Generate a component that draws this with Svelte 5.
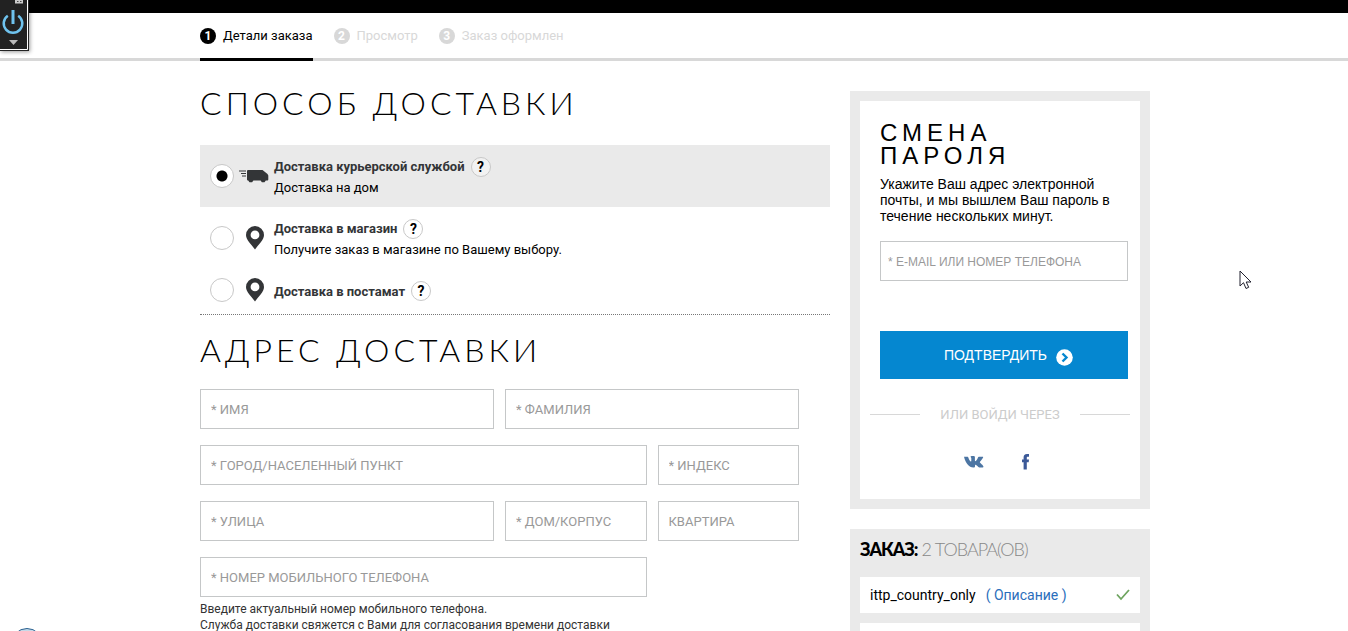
<script>
  const steps = ['Детали заказа', 'Просмотр', 'Заказ оформлен'];
  const methods = [
    { id: 'courier', title: 'Доставка курьерской службой', note: 'Доставка на дом', icon: 'van' },
    { id: 'shop', title: 'Доставка в магазин', note: 'Получите заказ в магазине по Вашему выбору.', icon: 'pin' },
    { id: 'postamat', title: 'Доставка в постамат', note: '', icon: 'pin' }
  ];
  const fields = [
    { id: 'first', label: '* ИМЯ', size: 'half' },
    { id: 'last', label: '* ФАМИЛИЯ', size: 'half' },
    { id: 'city', label: '* ГОРОД/НАСЕЛЕННЫЙ ПУНКТ', size: 'wide' },
    { id: 'zip', label: '* ИНДЕКС', size: 'quarter' },
    { id: 'street', label: '* УЛИЦА', size: 'half' },
    { id: 'house', label: '* ДОМ/КОРПУС', size: 'quarter' },
    { id: 'flat', label: 'КВАРТИРА', size: 'quarter' },
    { id: 'phone', label: '* НОМЕР МОБИЛЬНОГО ТЕЛЕФОНА', size: 'wide' }
  ];
  let chosen = $state('courier');
</script>

<div class="page">
  <div class="topbar"></div>
  <nav class="progress">
    <ol class="container steps">
      {#each steps as step, i}
        <li class:active={i === 0}><span class="num">{i + 1}</span>{step}</li>
      {/each}
    </ol>
  </nav>

  <main class="container columns">
    <form class="checkout">
      <h1>СПОСОБ ДОСТАВКИ</h1>
      <div class="methods">
        {#each methods as m}
          <div class="method" class:selected={chosen === m.id}>
            <input type="radio" name="method" id={m.id} value={m.id} bind:group={chosen} />
            <span class="icon">
              {#if m.icon === 'van'}
                <svg width="30" height="14" viewBox="0 0 30 14" aria-hidden="true">
                  <path d="M0 2h7M2 4.500h5M3 7h4" stroke="#333537" stroke-width="1.200" />
                  <path d="M8 2q0-1 1-1h14.500l5 4 .8 1.500v4q0 1-1 1h-1.500l-1.300 1.800h-2.600l-1.300-1.800h-7.200l-1.300 1.800h-2.600l-1.300-1.800H9q-1 0-1-1z" fill="#333537" />
                </svg>
              {:else}
                <svg class="pin" width="18" height="24" viewBox="0 0 18 24" aria-hidden="true">
                  <path fill-rule="evenodd" d="M9 0a9 9 0 0 0-9 9c0 5 5 9 9 14.500C13 18 18 14 18 9a9 9 0 0 0-9-9zm0 4.500a4.400 4.400 0 1 1 0 8.800 4.400 4.400 0 0 1 0-8.800z" fill="#333537" />
                </svg>
              {/if}
            </span>
            <div class="text">
              <div class="title">
                <label for={m.id}>{m.title}</label>
                <button type="button" class="help">?</button>
              </div>
              {#if m.note}<div class="note">{m.note}</div>{/if}
            </div>
          </div>
        {/each}
      </div>

      <h1>АДРЕС ДОСТАВКИ</h1>
      <div class="fields">
        {#each fields as f}
          <input class="field {f.size}" type="text" id={f.id} placeholder={f.label} aria-label={f.label} />
        {/each}
      </div>
      <p class="hint">Введите актуальный номер мобильного телефона.<br />Служба доставки свяжется с Вами для согласования времени доставки</p>
    </form>

    <aside>
      <section class="password">
        <h2>СМЕНА ПАРОЛЯ</h2>
        <p>Укажите Ваш адрес электронной почты, и мы вышлем Ваш пароль в течение нескольких минут.</p>
        <input class="field email" type="text" placeholder="* E-MAIL ИЛИ НОМЕР ТЕЛЕФОНА" aria-label="E-mail или номер телефона" />
        <button type="button" class="submit">
          ПОДТВЕРДИТЬ
          <svg width="17" height="17" viewBox="0 0 17 17" aria-hidden="true">
            <circle cx="8.5" cy="8.500" r="8.300" fill="#fff" />
            <path d="M6.500 4.500l4 4-4 4" fill="none" stroke="#0587d0" stroke-width="2.400" />
          </svg>
        </button>
        <div class="or"><span>ИЛИ ВОЙДИ ЧЕРЕЗ</span></div>
        <div class="social">
          <a href="#vk" aria-label="VK">
            <svg width="20" height="12" viewBox="0 0 20 12" aria-hidden="true">
              <path fill="#4c75a3" d="M0 .8h3.600q.5 0 .7.600c.9 2.400 2 4.100 2.600 4.100.3 0 .4-.2.4-1V2.300C7.200 1.100 6.500 1.200 6.500.7 7 .1 8 0 9 0c1.600 0 1.900.3 1.900 1.300v3.300c0 .5.200.7.400.7.400 0 2-2 2.700-3.900.2-.4.400-.6.900-.6h3.600c.8 0 .8.400.5 1-.8 1.700-3.200 4-3.200 4.500s3.600 3 3.700 4.500c0 .5-.4.700-.9.700h-3.300c-1.200 0-2.700-2.700-3.700-2.700-.5 0-.6.500-.6 1.500 0 .8-.3 1.200-1.700 1.200C5 11.500 1.700 7.500 0 .8z" />
            </svg>
          </a>
          <a href="#fb" aria-label="Facebook">
            <svg width="8" height="16" viewBox="0 0 8 16" aria-hidden="true">
              <path fill="#3b5998" d="M1.600 15.500V8.300H0V5.500h1.600V3.600C1.600 1.200 2.600 0 5 0h2v2.800H5.800c-.8 0-1 .3-1 1v1.700h2.200l-.3 2.800H4.800v7.200z" />
            </svg>
          </a>
        </div>
      </section>

      <section class="order">
        <h3><strong>ЗАКАЗ:</strong> 2 ТОВАРА(ОВ)</h3>
        <div class="promo">
          <span>ittp_country_only</span>
          <a href="#about">( Описание )</a>
          <svg width="14" height="12" viewBox="0 0 14 12" aria-hidden="true">
            <path d="M1 5.500L5 10 13 1" fill="none" stroke="#6ea45f" stroke-width="1.800" />
          </svg>
        </div>
        <div class="promo"></div>
      </section>
    </aside>
  </main>

  <div class="power">
    <svg width="29" height="51" viewBox="0 0 29 51" aria-hidden="true">
      <path d="M0 0h29v51H0z" fill="#222" />
      <path d="M27.500 0v49.500H0" fill="none" stroke="#fff" />
      <path d="M15 0h8v3.500h-8z" fill="#ccc" />
      <path d="M17 1.500h1.500M20 1.500h1.500" stroke="#444" />
      <path d="M7.800 15.700a9.300 9.300 0 1 0 10.400 0" fill="none" stroke="#6fc3ee" stroke-width="2.500" />
      <path d="M13 10v14" stroke="#6fc3ee" stroke-width="3" />
      <path d="M9 40h9l-4.500 5z" fill="#bbb" />
    </svg>
  </div>
  <svg class="cursor" width="13" height="20" viewBox="0 0 13 20" aria-hidden="true">
    <path d="M1 1v15l3.500-3.300L7 18.500l2.700-1.200-2.500-5.300h4.800z" fill="#fff" stroke="#20202e" />
  </svg>
  <div class="orb"></div>
</div>

<style>
  :global(body) { margin: 0; background: #fff; }
  .page {
    position: relative;
    height: 100vh;
    overflow: hidden;
    font: 13px/21px Roboto, "Liberation Sans", sans-serif;
    color: #000;
  }
  .page *, .page *::before { box-sizing: border-box; }
  h1, h2, h3, p, ol { margin: 0; padding: 0; }
  a { text-decoration: none; }
  input, button { font-family: inherit; margin: 0; }
  .container { max-width: 952px; margin: 0 auto; padding-left: 2px; }
  .topbar { height: 13px; background: #000; }
  .progress { border-bottom: 3px solid #d8d8d8; }
  .steps { display: flex; gap: 21px; list-style: none; }
  .steps li {
    display: flex;
    align-items: center;
    gap: 7px;
    height: 48px;
    margin-bottom: -3px;
    border-bottom: 3px solid transparent;
    color: #d8d8d8;
  }
  .steps .active { color: #000; border-color: #000; }
  .num {
    width: 16px;
    height: 16px;
    border-radius: 50%;
    background: #d8d8d8;
    color: #fff;
    font-size: 12px;
    font-weight: 700;
    line-height: 16px;
    text-align: center;
  }
  .active .num { background: #000; }
  .columns {
    display: grid;
    grid-template-columns: minmax(0, 1fr) 300px;
    gap: 20px;
    align-items: start;
    padding-top: 30px;
  }
  h1 {
    font: 300 32px/24px Lato, sans-serif;
    letter-spacing: 4px;
    white-space: nowrap;
  }
  .methods { margin: 30px 0 23px; padding-bottom: 3px; border-bottom: 1px dotted #777; }
  .method { display: flex; align-items: center; padding: 9px 10px; }
  .selected { background: #eaeaea; }
  .method input {
    appearance: none;
    width: 24px;
    height: 24px;
    border: 1px solid #c8c8c8;
    border-radius: 50%;
    background: #fff;
  }
  .method input:checked { background: radial-gradient(circle, #000 5px, #fff 6px); }
  .icon { display: flex; width: 40px; padding-left: 5px; }
  .pin { margin-left: 7px; }
  .text { flex: 1; padding-top: 2px; }
  .title { display: flex; align-items: center; gap: 6px; height: 21px; font-weight: 700; color: #333537; }
  .help {
    width: 20px;
    height: 20px;
    padding: 0;
    border: 1px solid #c8c8c8;
    border-radius: 50%;
    background: #fff;
    font-size: 14px;
    font-weight: 700;
    line-height: 18px;
    color: #000;
  }
  .selected .help { background: #f2f2f2; }
  .fields {
    display: grid;
    grid-template-columns: repeat(4, minmax(0, 1fr));
    gap: 16px 11px;
    max-width: 599px;
    margin-top: 27px;
  }
  .field {
    width: 100%;
    height: 40px;
    padding: 0 10px;
    border: 1px solid #c5c7c8;
    border-radius: 0;
    background: #fff;
    font-size: 13px;
  }
  .field::placeholder { color: #999; opacity: 1; }
  .half { grid-column: span 2; }
  .wide { grid-column: span 3; }
  .hint { margin-top: 4px; font-size: 12px; line-height: 16px; color: #333; }
  .password {
    padding: 20px 12px 27px 20px;
    border: 10px solid #eaeaea;
    font-family: "Liberation Sans", Arial, sans-serif;
  }
  .password h2 { width: 200px; font-size: 24px; font-weight: 400; line-height: 23px; letter-spacing: 5px; }
  .password p { margin-top: 9px; font-size: 14px; line-height: 16px; }
  .email { margin-top: 17px; padding: 2px 7px 0; font-size: 12px; }
  .submit {
    display: flex;
    align-items: center;
    justify-content: center;
    gap: 9px;
    width: 100%;
    height: 48px;
    margin-top: 50px;
    padding: 0 0 0 9px;
    border: 0;
    background: #0587d0;
    color: #fff;
    font-size: 14px;
  }
  .submit svg { margin-top: 4px; }
  .or {
    display: flex;
    align-items: center;
    justify-content: space-between;
    margin: 25px -2px 0 -10px;
    color: #ccc;
    font: 13px/21px Roboto, sans-serif;
  }
  .or::before, .or::after { content: ""; width: 50px; height: 1px; background: #d8d8d8; }
  .social {
    display: flex;
    align-items: center;
    justify-content: center;
    gap: 38px;
    height: 20px;
    margin: 27px 14px 0 0;
  }
  .social a { display: flex; }
  .order { margin-top: 20px; padding: 10px; background: #eaeaea; }
  .order h3 { margin-bottom: 18px; font: 300 18px/20px Lato, sans-serif; letter-spacing: -1px; color: #888; }
  .order strong { font-weight: 900; color: #000; }
  .promo { display: flex; align-items: center; gap: 10px; height: 36px; margin-bottom: 10px; padding: 0 10px; background: #fff; font-size: 14px; }
  .promo a { color: #2a6ebb; }
  .promo svg { margin-left: auto; }
  .power { position: absolute; top: 0; left: 0; height: 51px; box-shadow: 1px 1px 4px rgba(0, 0, 0, 0.4); }
  .power svg { display: block; }
  .cursor { position: absolute; left: 1239px; top: 270px; }
  .orb {
    position: absolute;
    left: 11px;
    top: 628px;
    width: 32px;
    height: 32px;
    border: 1px solid #286090;
    border-radius: 50%;
    background: #c5d9e8;
  }
</style>
